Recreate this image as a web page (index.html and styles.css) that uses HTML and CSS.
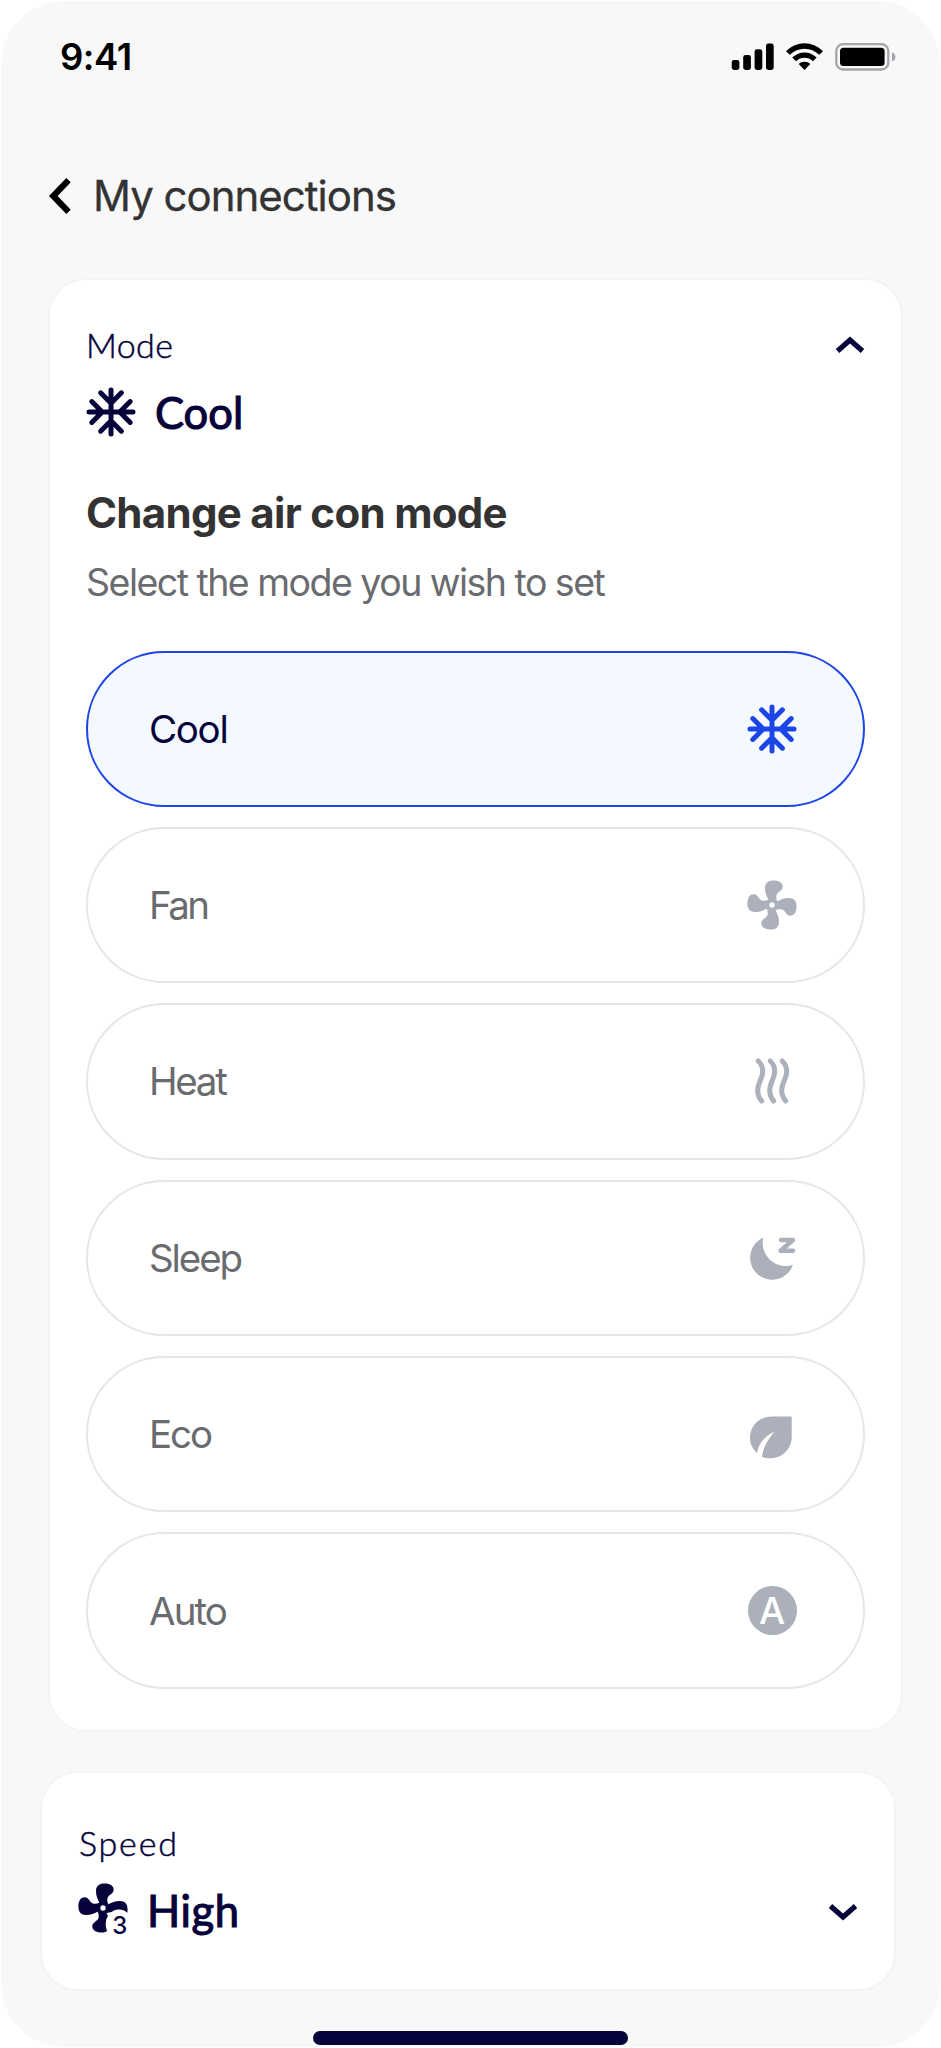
FILE: index.html
```html
<!DOCTYPE html>
<html lang="en">
<head>
<meta charset="utf-8">
<title>My connections</title>
<link rel="stylesheet" href="styles.css">
</head>
<body>
<svg class="defs" width="0" height="0" aria-hidden="true">
  <symbol id="snow" viewBox="-25 -25 50 50">
    <path fill="none" stroke="currentColor" stroke-width="5" stroke-linecap="round" d="M0-22V22M-22 0H22M-10.4-19.2 0-8.8 10.4-19.2M-10.4 19.2 0 8.8 10.4 19.2M-19.2-10.4-8.8 0-19.2 10.4M19.2-10.4 8.8 0 19.2 10.4"/>
  </symbol>
  <symbol id="fan" viewBox="-25 -25 50 50">
    <g fill="currentColor">
      <path id="blade" d="M-3-4C-5.5-9-7-12-7-17C-7-22-4-24.6 1.5-24.6C7.5-24.6 10.7-22 10.7-18.3C10.7-13.5 4.3-13.5 4.3-8.5C4.3-6.5 4.5-5 5.5-3.5L0 0Z"/>
      <use href="#blade" transform="rotate(90)"/>
      <use href="#blade" transform="rotate(180)"/>
      <use href="#blade" transform="rotate(270)"/>
      <circle r="5.6"/>
    </g>
    <circle r="2.7" fill="#fff"/>
  </symbol>
</svg>
<main class="phone">
  <div class="status">
    <span class="time">9:41</span>
    <svg class="indicators" width="168" height="32" viewBox="730 41 168 32">
      <rect x="731.7" y="60" width="7.7" height="10" rx="2.4"/>
      <rect x="743.2" y="55" width="7.7" height="15" rx="2.4"/>
      <rect x="754.6" y="49.3" width="7.7" height="20.7" rx="2.4"/>
      <rect x="766" y="43.5" width="7.7" height="26.5" rx="2.4"/>
      <path d="M786 51.2C796.5 40.5 812.5 40.5 823 51.2L819.2 54.8C811 46.8 798 46.8 789.8 54.8ZM792.3 57.6C799.2 50.7 809.8 50.7 816.7 57.6L813 61.3C808.2 56.7 800.8 56.7 796 61.3ZM798.7 63.9C802 60.9 807 60.9 810.3 63.9L804.5 70Z"/>
      <rect x="836.3" y="44.2" width="52" height="25.3" rx="6.8" fill="none" stroke="#a5a5ab" stroke-width="2.3"/>
      <rect x="840" y="47.8" width="44.6" height="18.1" rx="3.5"/>
      <path d="M892 52.3C896.6 54 896.6 60 892 61.6Z" fill="#a5a5ab"/>
    </svg>
  </div>
  <header class="header">
    <svg width="24" height="38" viewBox="0 0 24 38"><path fill="none" stroke="#000" stroke-width="6.2" d="M20.5 3.2 5.3 19 20.5 34.8"/></svg>
    <h1 class="page-title">My connections</h1>
  </header>

  <section class="card mode-card">
    <div class="card-head">
      <span class="eyebrow mode-label">Mode</span>
      <svg width="30" height="18" viewBox="0 0 30 18"><path fill="none" stroke="#06023a" stroke-width="5.2" d="M2.5 15 15 4 27.5 15"/></svg>
    </div>
    <div class="current">
      <svg class="icon" width="50" height="50"><use href="#snow"/></svg>
      <span class="value cool-value">Cool</span>
    </div>
    <h2 class="title">Change air con mode</h2>
    <p class="subtitle">Select the mode you wish to set</p>
    <div class="options">
      <div class="option selected"><span class="name n-cool">Cool</span><svg class="icon" width="50" height="50"><use href="#snow"/></svg></div>
      <div class="option"><span class="name n-fan">Fan</span><svg class="icon" width="50" height="50"><use href="#fan"/></svg></div>
      <div class="option"><span class="name n-heat">Heat</span><svg class="icon" width="50" height="50" viewBox="-25 -25 50 50">
        <g fill="none" stroke="currentColor" stroke-width="5" stroke-linecap="round">
          <path id="wave" d="M-13.8-20C-10.6-17-9.3-13.5-9.3-9.5C-9.3-3-14.3 2-14.3 9C-14.3 13-13 17-10.3 20"/>
          <use href="#wave" x="12"/><use href="#wave" x="24"/>
        </g></svg></div>
      <div class="option"><span class="name n-sleep">Sleep</span><svg class="icon" width="50" height="50" viewBox="-25 -25 50 50">
        <path fill="currentColor" d="M-8.7-20.4A23 23 0 0 0 21 6.8A22 22 0 1 1-8.7-20.4Z"/>
        <path fill="none" stroke="currentColor" stroke-width="4.6" stroke-linecap="round" stroke-linejoin="round" d="M9.2-18H21L8.6-7.3H21"/></svg></div>
      <div class="option"><span class="name n-eco">Eco</span><svg class="icon" width="50" height="50" viewBox="-25 -25 50 50">
        <path fill="currentColor" d="M19.7-17.5V3C19.7 15 10 24.3-1.5 24.3C-5 24.3-7.5 23.8-10 22.7C-9 14-4 5 2.5-2.2C-6 1-13.5 9-15 19C-19 15.5-22 10-22 4C-22-9-12-17.5 0-17.5Z"/></svg></div>
      <div class="option"><span class="name n-auto">Auto</span><span class="auto-icon">A</span></div>
    </div>
  </section>

  <section class="card speed-card">
    <div class="speed-info">
      <span class="eyebrow speed-label">Speed</span>
      <div class="current">
        <svg class="icon fan-three" width="52" height="70" viewBox="-25 -35 52 70">
          <use href="#fan" x="-25" y="-25" width="50" height="50"/>
          <ellipse cx="16" cy="16.3" rx="13.3" ry="14.8" fill="#fff"/>
          <text class="level" x="9.2" y="25.6">3</text>
        </svg>
        <span class="value high-value">High</span>
      </div>
    </div>
    <svg class="chevron" width="30" height="18" viewBox="0 0 30 18"><path fill="none" stroke="#06023a" stroke-width="5.2" d="M2.5 3 15 14 27.5 3"/></svg>
  </section>
  <div class="home-bar"></div>
</main>
</body>
</html>
```
FILE: styles.css
```css
* { box-sizing: border-box; }
body { margin: 0; background: #fff; }
.defs { position: absolute; }
.phone {
  width: 939px; height: 2046px; margin: 1px; overflow: hidden;
  border-radius: 64px; background: #f8f8f8; color: #06023a;
  font-family: Inter, "Liberation Sans", sans-serif;
  display: flex; flex-direction: column;
}
h1, h2, p { margin: 0; font-weight: 400; white-space: nowrap; }
span { white-space: nowrap; }
svg { display: block; flex: none; }
.status { height: 112px; padding: 34px 42px 0 59px; display: flex; justify-content: space-between; }
.time { font-size: 36.5px; line-height: 45px; font-weight: 600; color: #000; letter-spacing: -0.5px; }
.indicators { margin-top: 6px; }
.header { height: 165px; padding: 58px 0 57px 47px; display: flex; gap: 21px; align-items: center; }
.page-title { font-size: 42px; line-height: 52px; color: #333; letter-spacing: -1px; -webkit-text-stroke: 0.3px #333; }
.card { background: #fff; border: 2px solid #f4f4f4; border-radius: 38px; }
.mode-card { width: 855px; height: 1454px; margin-left: 47px; padding: 42px 36px 0; }
.card-head { height: 46px; display: flex; justify-content: space-between; align-items: center; }
.eyebrow { font-family: Lato, sans-serif; font-weight: 300; font-size: 34px; line-height: 44px; -webkit-text-stroke: 0.5px #06023a; }
.mode-label { letter-spacing: 0.4px; }
.speed-label { letter-spacing: 1.8px; padding-left: 1px; }
.current { display: flex; align-items: center; gap: 18px; height: 50px; }
.mode-card .current { margin-top: 19px; }
.value { font-family: Lato, sans-serif; font-weight: 400; font-size: 43.5px; line-height: 50px; -webkit-text-stroke: 1.1px #06023a; }
.cool-value { letter-spacing: 0; padding-left: 1px; }
.high-value { letter-spacing: 0.6px; padding-top: 3px; margin-left: -1px; }
.title { margin-top: 50px; font-size: 42px; line-height: 52px; font-weight: 700; color: #333; letter-spacing: -0.7px; }
.subtitle { margin-top: 18px; font-size: 37.5px; line-height: 52px; color: #6a6b6f; letter-spacing: -1.52px; }
.options { margin-top: 41.5px; display: flex; flex-direction: column; gap: 20px; }
.option {
  height: 156.4px; flex: none; padding: 0 66.5px 0 61px; border: 2px solid #e6e6e6; border-radius: 79px;
  display: flex; align-items: center; justify-content: space-between; color: #abb0ba;
}
.name { font-size: 38.5px; line-height: 50px; color: #6a6b6f; letter-spacing: -2.1px; }
.name.n-cool { letter-spacing: -1.3px; }
.n-fan { letter-spacing: -2.6px; }
.n-heat { letter-spacing: -2.3px; }
.n-auto { letter-spacing: -1.9px; }
.selected { background: #f4f9ff; border-color: #1d45e6; color: #1d45e6; }
.selected .name { color: #06023a; }
.auto-icon {
  width: 49px; height: 49px; border-radius: 50%; background: #abb0ba; color: #fff;
  font-size: 37px; line-height: 49px; font-weight: 500; text-align: center;
}
.speed-card { width: 856px; height: 220px; margin: 39px 0 0 39px; padding: 48px 36px 0 36px; display: flex; justify-content: space-between; }
.speed-info .eyebrow { display: block; }
.speed-info .current { margin-top: 18px; }
.level { font-size: 24px; font-weight: 500; fill: #06023a; }
.chevron { margin-top: 82px; }
.home-bar { width: 315px; height: 14px; margin: 40px auto 0; border-radius: 7px; background: #06023a; }
```
